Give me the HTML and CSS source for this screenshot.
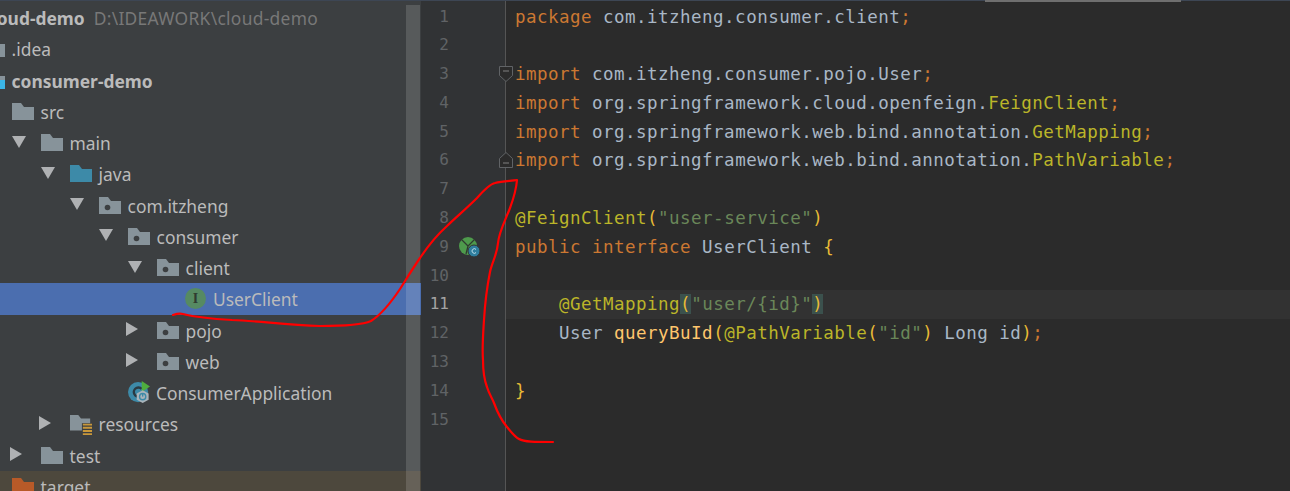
FILE: index.html
```html
<!DOCTYPE html>
<html lang="en">
<head>
<meta charset="utf-8">
<title>UserClient.java - cloud-demo</title>
<link rel="stylesheet" href="styles.css">
</head>
<body>
<svg class="defs" width="0" height="0" aria-hidden="true">
  <symbol id="folder" viewBox="0 0 22 17"><path d="M0 0h9l3 4h10v13H0z" fill="currentColor"/></symbol>
  <symbol id="pkg" viewBox="0 0 22 17"><path d="M0 0h9l3 4h10v13H0z" fill="currentColor"/><circle cx="8.5" cy="10.5" r="2.8" fill="#3c3f41"/></symbol>
  <symbol id="down" viewBox="0 0 14 12"><path d="M0 0h14L7 12z" fill="#afb1b3"/></symbol>
  <symbol id="right" viewBox="0 0 12 14"><path d="M0 0l12 7L0 14z" fill="#afb1b3"/></symbol>
</svg>
<div class="topbar"><span class="toptab"></span></div>
<main class="window">
  <aside class="sidebar">
    <div class="tree">
      <div class="row lv-2"><span class="slot"></span><span class="ico"></span><span class="name"><b>cloud-demo</b><span class="path">D:\IDEAWORK\cloud-demo</span></span></div>
      <div class="row lv-1"><span class="slot"></span><svg class="ico"><use href="#folder"/></svg><span class="name">.idea</span></div>
      <div class="row lv-1"><span class="slot"></span><svg class="ico" viewBox="0 0 22 17"><path d="M0 0h9l3 4h10v13H0z" fill="#87939a"/><rect x="11" y="8" width="11" height="10" fill="#3bb5e6"/></svg><span class="name"><b>consumer-demo</b></span></div>
      <div class="row lv0"><span class="slot"></span><svg class="ico"><use href="#folder"/></svg><span class="name">src</span></div>
      <div class="row lv1"><span class="slot"><svg class="arrow-d"><use href="#down"/></svg></span><svg class="ico"><use href="#folder"/></svg><span class="name">main</span></div>
      <div class="row lv2"><span class="slot"><svg class="arrow-d"><use href="#down"/></svg></span><svg class="ico blue"><use href="#folder"/></svg><span class="name">java</span></div>
      <div class="row lv3"><span class="slot"><svg class="arrow-d"><use href="#down"/></svg></span><svg class="ico"><use href="#pkg"/></svg><span class="name">com.itzheng</span></div>
      <div class="row lv4"><span class="slot"><svg class="arrow-d"><use href="#down"/></svg></span><svg class="ico"><use href="#pkg"/></svg><span class="name">consumer</span></div>
      <div class="row lv5"><span class="slot"><svg class="arrow-d"><use href="#down"/></svg></span><svg class="ico"><use href="#pkg"/></svg><span class="name">client</span></div>
      <div class="row lv6 selected"><span class="slot"></span><span class="iface">I</span><span class="name">UserClient</span></div>
      <div class="row lv5"><span class="slot"><svg class="arrow-r"><use href="#right"/></svg></span><svg class="ico"><use href="#pkg"/></svg><span class="name">pojo</span></div>
      <div class="row lv5"><span class="slot"><svg class="arrow-r"><use href="#right"/></svg></span><svg class="ico"><use href="#pkg"/></svg><span class="name">web</span></div>
      <div class="row lv4"><span class="slot"></span>
        <svg class="ico app" viewBox="0 0 24 25"><circle cx="11" cy="12" r="11" fill="#3d8aa8"/><path d="M15 8.6a5 5 0 1 0 0 6.8" fill="none" stroke="#2b3a42" stroke-width="2.6"/><path d="M15 0l9 6-9 6z" fill="#4fae3d"/><path d="M16 10l6.5 3.5v7L16 24l-6.500-3.500v-7z" fill="#a9b4bb"/><circle cx="16" cy="17" r="3.400" fill="none" stroke="#3d8aa8" stroke-width="1.500"/><path d="M16 13.500v3.500" stroke="#3d8aa8" stroke-width="1.500"/></svg>
        <span class="name">ConsumerApplication</span></div>
      <div class="row lv2"><span class="slot"><svg class="arrow-r"><use href="#right"/></svg></span>
        <svg class="ico res" viewBox="0 0 24 22"><path d="M0 0h9l3 4h10v13H0z" fill="#87939a"/><rect x="13" y="9" width="11" height="13" fill="#3c3f41"/><path d="M14 10.500h10M14 14h10M14 17.500h10M14 21h10" stroke="#c9983a" stroke-width="2"/></svg>
        <span class="name">resources</span></div>
      <div class="row lv1"><span class="slot"><svg class="arrow-r"><use href="#right"/></svg></span><svg class="ico"><use href="#folder"/></svg><span class="name">test</span></div>
      <div class="row lv0 excluded"><span class="slot"></span><svg class="ico orange"><use href="#folder"/></svg><span class="name">target</span></div>
    </div>
    <div class="scrollbar"></div>
  </aside>
  <section class="editor">
    <div class="gutter">
      <div class="num">1</div><div class="num">2</div><div class="num">3</div><div class="num">4</div><div class="num">5</div>
      <div class="num">6</div><div class="num">7</div><div class="num">8</div>
      <div class="num">9
        <svg class="bean" viewBox="0 0 21 20"><circle cx="9" cy="9" r="9" fill="#4e9a4c"/><path d="M2 2l7 7M16 2L9 9l-2 8" fill="none" stroke="#2f3a30" stroke-width="1.300"/><circle cx="15" cy="14" r="6" fill="#2f7e9e" stroke="#313335"/><path d="M17 12.400a2.300 2.300 0 1 0 0 3.200" fill="none" stroke="#bfe0ec" stroke-width="1"/></svg>
      </div>
      <div class="num">10</div><div class="num current">11</div><div class="num">12</div><div class="num">13</div><div class="num">14</div><div class="num">15</div>
    </div>
    <div class="code">
<div class="ln"><span class="k">package</span> com.itzheng.consumer.client<span class="k">;</span></div>
<div class="ln"></div>
<div class="ln"><span class="k">import</span> com.itzheng.consumer.pojo.User<span class="k">;</span><svg class="fold" viewBox="0 0 14 16"><path d="M.5.500h13v9l-6.500 6-6.500-6z" fill="#2b2b2b" stroke="#606366"/><path d="M4 5h6" stroke="#808080"/></svg></div>
<div class="ln"><span class="k">import</span> org.springframework.cloud.openfeign.<span class="a">FeignClient</span><span class="k">;</span></div>
<div class="ln"><span class="k">import</span> org.springframework.web.bind.annotation.<span class="a">GetMapping</span><span class="k">;</span></div>
<div class="ln"><span class="k">import</span> org.springframework.web.bind.annotation.<span class="a">PathVariable</span><span class="k">;</span><svg class="fold" viewBox="0 0 14 16"><path d="M.5 15.500v-9l6.500-6 6.500 6v9z" fill="#2b2b2b" stroke="#606366"/><path d="M4 11h6" stroke="#808080"/></svg></div>
<div class="ln"></div>
<div class="ln"><span class="a">@FeignClient</span><span class="b">(</span><span class="s">"user-service"</span><span class="b">)</span></div>
<div class="ln"><span class="k">public interface</span> UserClient <span class="b">{</span></div>
<div class="ln"></div>
<div class="ln caret">    <span class="a">@GetMapping</span><span class="b hl">(</span><span class="s">"user/{id}"</span><span class="b hl">)</span></div>
<div class="ln">    User <span class="m">queryBuId</span><span class="b">(</span><span class="a">@PathVariable</span><span class="b">(</span><span class="s">"id"</span><span class="b">)</span> Long id<span class="b">)</span><span class="k">;</span></div>
<div class="ln"></div>
<div class="ln"><span class="b">}</span></div>
<div class="ln"></div>
    </div>
  </section>
</main>
<svg class="scribble" viewBox="0 0 1290 491" width="1290" height="491" aria-hidden="true">
  <path d="M173 315C176 314 179 313 183 314C195 317 215 319 232 320C260 321 285 325 320 326C345 326 362 325 371 321C382 314 392 301 400 289C407 278 413 268 420 258C428 246 437 235 447 226C456 217 465 210 477 198C484 190 490 184 495 183C502 181 510 181 517 180C516 192 513 200 510 208C505 221 499 232 498 243C497 255 492 262 490 272C487 287 485 303 484 320C483 335 482 348 483 360C483 372 484 379 487 387C489 394 492 398 494 403C498 414 502 421 507 427C511 432 515 437 519 439C524 442 535 442 553 442" fill="none" stroke="#f00" stroke-width="2.200" stroke-linecap="round" stroke-linejoin="round"/>
</svg>
</body>
</html>
```
FILE: styles.css
```css
* { box-sizing: border-box; }
html, body { margin: 0; height: 100%; }
body {
  width: 1290px;
  height: 491px;
  overflow: hidden;
  background: #2b2b2b;
  display: flex;
  flex-direction: column;
  position: relative;
}
.defs { position: absolute; }
.topbar { height: 1px; flex: none; background: #3d4654; position: relative; }
.toptab { position: absolute; left: 985px; top: 0; width: 196px; height: 2px; background: #6f6f6f; }
.window { flex: 1; display: flex; min-height: 0; }

/* project tree */
.sidebar {
  width: 421px;
  flex: none;
  background: #3c3f41;
  overflow: hidden;
  position: relative;
  font-family: "Noto Sans", sans-serif;
  font-size: 17.4px;
  color: #bbbbbb;
}
.tree { margin-left: -80px; padding-top: 1px; width: 501px; }
.row { height: 31.25px; display: flex; align-items: center; white-space: nowrap; }
.lv-2 { padding-left: 4px; }
.lv-1 { padding-left: 33px; }
.lv0 { padding-left: 62px; }
.lv1 { padding-left: 91px; }
.lv2 { padding-left: 120px; }
.lv3 { padding-left: 149px; }
.lv4 { padding-left: 178px; }
.lv5 { padding-left: 207px; }
.lv6 { padding-left: 236px; }
.slot { width: 30px; flex: none; display: flex; align-items: center; }
.ico { width: 22px; height: 17px; flex: none; color: #87939a; margin-right: 6.6px; }
.ico.blue { color: #3d8aa8; }
.ico.orange { color: #b85a28; }
.ico.app { height: 25px; margin-right: 6px; }
.ico.res { height: 22px; margin-top: 2px; }
.arrow-d { width: 14px; height: 12px; margin-left: 1px; margin-top: -2px; }
.arrow-r { width: 12px; height: 14px; margin-left: -1px; margin-top: -2px; }
.name { padding-top: 1px; }
.name b { font-weight: 700; }
.path { color: #787878; margin-left: 9px; letter-spacing: 0.3px; }
.selected { background: #4b6eaf; }
.excluded { background: #4d483d; }
.iface {
  width: 21px;
  height: 21px;
  border-radius: 50%;
  background: #568a62;
  color: #2f3a30;
  font: 700 14px/21px "Liberation Serif", serif;
  text-align: center;
  margin-right: 7px;
  margin-left: -1px;
  flex: none;
}
.scrollbar {
  position: absolute;
  left: 406px;
  top: 4px;
  bottom: 0;
  width: 14px;
  background: rgba(255, 255, 255, 0.14);
}

/* editor */
.editor { flex: 1; display: flex; min-width: 0; }
.gutter {
  width: 85px;
  flex: none;
  background: #313335;
  border-right: 1px solid #555555;
  font-family: "DejaVu Sans Mono", monospace;
  font-size: 16px;
  color: #606366;
  padding-top: 1.5px;
}
.num {
  height: 28.8px;
  line-height: 28.8px;
  width: 28px;
  text-align: right;
  position: relative;
  white-space: nowrap;
}
.num.current { color: #a4a3a3; }
.bean { position: absolute; left: 38px; top: 4px; width: 21px; height: 20px; }
.code {
  flex: 1;
  min-width: 0;
  font-family: "DejaVu Sans Mono", monospace;
  font-size: 17.500px;
  letter-spacing: 0.470px;
  color: #a9b7c6;
  padding-top: 1.5px;
}
.ln {
  height: 28.8px;
  line-height: 28.8px;
  padding-left: 9px;
  white-space: pre;
  position: relative;
}
.caret { background: #323232; }
.k { color: #cc7832; }
.a { color: #bbb529; }
.s { color: #6a8759; }
.b { color: #e8ba36; }
.m { color: #ffc66d; }
.hl { background: #3b514d; }
.fold { position: absolute; left: -7px; top: 6px; width: 14px; height: 16px; }
.scribble { position: absolute; left: 0; top: 0; pointer-events: none; }
```
